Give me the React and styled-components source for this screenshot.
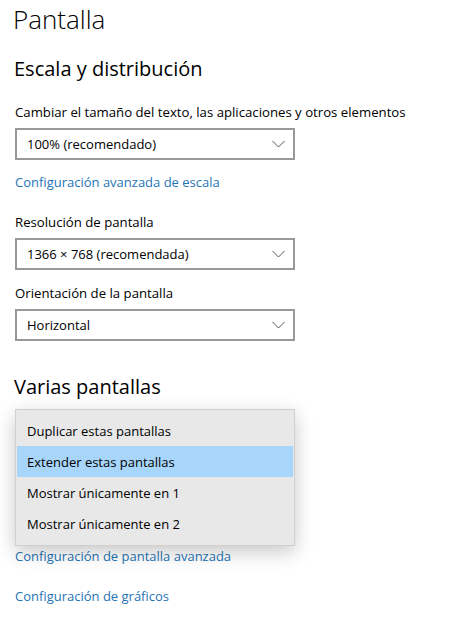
import React from 'react'
import styled, { createGlobalStyle } from 'styled-components'

const GlobalStyle = createGlobalStyle`
  html, body {
    margin: 0;
    padding: 0;
    background: #fff;
  }
  body {
    font-family: "Open Sans", "Noto Sans", "Liberation Sans", sans-serif;
    color: #000;
  }
`

const Page = styled.div`
  width: 470px;
  height: 635px;
  padding: 1px 15px 0 15px;
  box-sizing: border-box;
  overflow: hidden;
`

const Title = styled.h1`
  margin: 0 0 0 -2px;
  font-size: 26px;
  line-height: 36px;
  font-weight: 300;
`

const Heading = styled.h2`
  margin: ${p => p.$top}px 0 0 -1px;
  font-size: 20px;
  line-height: 28px;
  font-weight: 400;
`

const Label = styled.div`
  margin-top: ${p => p.$top}px;
  font-size: 13.2px;
  line-height: 20px;
`

const Select = styled.div`
  margin-top: 6px;
  width: 280px;
  height: 32px;
  box-sizing: border-box;
  border: 2px solid #999;
  background: #fff;
  display: flex;
  align-items: center;
  justify-content: space-between;
  padding: 0 8px 0 10px;
  font-size: 13px;
`

const Link = styled.a`
  display: block;
  margin-top: ${p => p.$top}px;
  font-size: 13px;
  line-height: 20px;
  color: #1f74b5;
  text-decoration: none;
  cursor: pointer;
`

// the open combo: the list lies over its closed box
const Multi = styled.div`
  position: relative;
  padding: 39px 0 68px 0;
`

const Menu = styled.ul`
  position: absolute;
  top: 8px;
  left: 0;
  width: 280px;
  box-sizing: border-box;
  margin: 0;
  padding: 5px 1px 6px 1px;
  list-style: none;
  background: #e8e8e8;
  border: 1px solid #cfcfcf;
  box-shadow: 0 6px 18px rgba(0, 0, 0, 0.22);
`

const Item = styled.li`
  height: 31px;
  display: flex;
  align-items: center;
  padding-left: 10px;
  font-size: 13px;
  background: ${p => (p.$selected ? '#a8d6fb' : 'transparent')};
`

const Chevron = () => (
  <svg width="13" height="8" viewBox="0 0 13 8">
    <path d="M0.5 1 L6.5 7 L12.5 1" fill="none" stroke="#555" strokeWidth="1" />
  </svg>
)

const Combo = ({ value }) => (
  <Select>
    <span>{value}</span>
    <Chevron />
  </Select>
)

const options = [
  'Duplicar estas pantallas',
  'Extender estas pantallas',
  'Mostrar únicamente en 1',
  'Mostrar únicamente en 2'
]

export default function App () {
  return (
    <>
      <GlobalStyle />
      <Page>
        <Title>Pantalla</Title>
        <Heading $top={18}>Escala y distribución</Heading>
        <Label $top={19}>Cambiar el tamaño del texto, las aplicaciones y otros elementos</Label>
        <Combo value="100% (recomendado)" />
        <Link $top={12}>Configuración avanzada de escala</Link>
        <Label $top={20}>Resolución de pantalla</Label>
        <Combo value="1366 × 768 (recomendada)" />
        <Label $top={13}>Orientación de la pantalla</Label>
        <Combo value="Horizontal" />
        <Heading $top={32}>Varias pantallas</Heading>
        <Multi>
          <Combo value="" />
          <Menu>
            {options.map((opt, key) => (
              <Item key={key} $selected={key === 1}>{opt}</Item>
            ))}
          </Menu>
        </Multi>
        <Link $top={0}>Configuración de pantalla avanzada</Link>
        <Link $top={20}>Configuración de gráficos</Link>
      </Page>
    </>
  )
}
